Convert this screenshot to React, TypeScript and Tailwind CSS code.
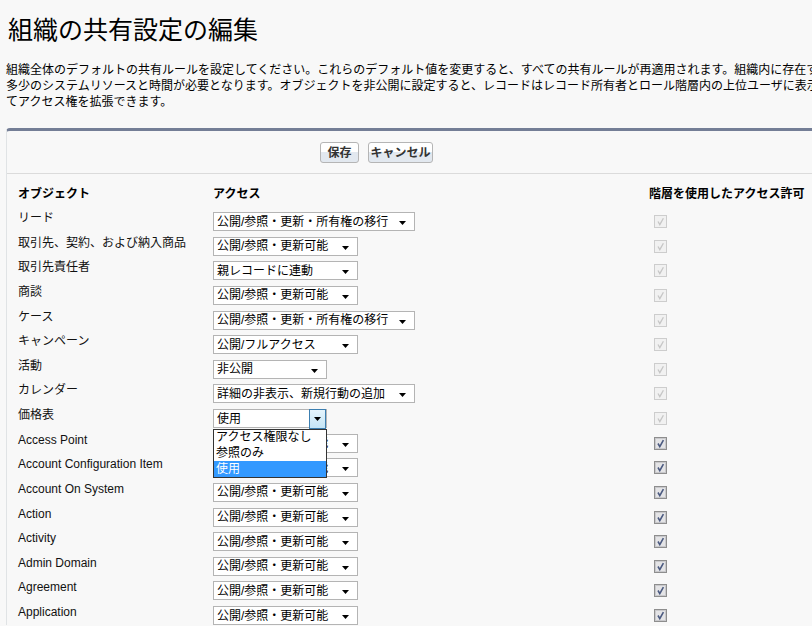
import React from 'react'

type Row = { name: string; access: string; w: 'wide' | 'mid' | 'small'; enabled: boolean; open?: boolean }

const ROWS: Row[] = [
  { name: 'リード', access: '公開/参照・更新・所有権の移行', w: 'wide', enabled: false },
  { name: '取引先、契約、および納入商品', access: '公開/参照・更新可能', w: 'mid', enabled: false },
  { name: '取引先責任者', access: '親レコードに連動', w: 'mid', enabled: false },
  { name: '商談', access: '公開/参照・更新可能', w: 'mid', enabled: false },
  { name: 'ケース', access: '公開/参照・更新・所有権の移行', w: 'wide', enabled: false },
  { name: 'キャンペーン', access: '公開/フルアクセス', w: 'mid', enabled: false },
  { name: '活動', access: '非公開', w: 'small', enabled: false },
  { name: 'カレンダー', access: '詳細の非表示、新規行動の追加', w: 'wide', enabled: false },
  { name: '価格表', access: '使用', w: 'small', enabled: false, open: true },
  { name: 'Access Point', access: '公開/参照・更新可能', w: 'mid', enabled: true },
  { name: 'Account Configuration Item', access: '公開/参照・更新可能', w: 'mid', enabled: true },
  { name: 'Account On System', access: '公開/参照・更新可能', w: 'mid', enabled: true },
  { name: 'Action', access: '公開/参照・更新可能', w: 'mid', enabled: true },
  { name: 'Activity', access: '公開/参照・更新可能', w: 'mid', enabled: true },
  { name: 'Admin Domain', access: '公開/参照・更新可能', w: 'mid', enabled: true },
  { name: 'Agreement', access: '公開/参照・更新可能', w: 'mid', enabled: true },
  { name: 'Application', access: '公開/参照・更新可能', w: 'mid', enabled: true },
]

const WIDTHS = { wide: 'w-[202px]', mid: 'w-[145px]', small: 'w-[114px]' }

function Arrow() {
  return (
    <svg width="7" height="4" viewBox="0 0 7 4">
      <path d="M0 0h7L3.5 4z" fill="#000" />
    </svg>
  )
}

function Select({ row }: { row: Row }) {
  return (
    <div className={`relative mt-[6px] flex h-[19px] items-center border border-[#b4b4b4] bg-white pl-[3px] ${WIDTHS[row.w]}`}>
      <span className="whitespace-nowrap leading-[16px] text-[#000]">{row.access}</span>
      {row.open ? (
        <>
          <div className="absolute right-0 top-[-1px] flex h-[20px] w-[17px] items-center justify-center border border-[#3c7fb1] bg-gradient-to-b from-[#e5f4fc] to-[#c4e5f6]">
            <Arrow />
          </div>
          {/* open option list */}
          <div className="absolute left-[-1px] top-[19px] z-10 flex w-[114px] flex-col border border-[#333] bg-white">
            <div className="flex h-[15.5px] items-center whitespace-nowrap pl-[2px] leading-[15px]">アクセス権限なし</div>
            <div className="flex h-[15.5px] items-center whitespace-nowrap pl-[2px] leading-[15px]">参照のみ</div>
            <div className="flex h-[16px] items-center whitespace-nowrap bg-[#3399ff] pl-[2px] leading-[15px] text-white">使用</div>
          </div>
        </>
      ) : (
        <div className="absolute right-[8px] top-[8px] flex">
          <Arrow />
        </div>
      )}
    </div>
  )
}

function Check({ enabled }: { enabled: boolean }) {
  return enabled ? (
    <div className="mt-[9px] ml-[5px] flex h-[13px] w-[13px] items-center justify-center border border-[#8e8e8e] bg-[#e4e4e6] shadow-[inset_0_0_0_1px_#c9c9cc]">
      <svg width="11" height="11" viewBox="0 0 11 11">
        <path d="M3 5.5 L4.8 8.6 L8.4 2.2" stroke="#4b5a80" strokeWidth="1.6" fill="none" />
      </svg>
    </div>
  ) : (
    <div className="mt-[9px] ml-[5px] flex h-[13px] w-[13px] items-center justify-center border border-[#cdcdcd] bg-[#f1f1f1]">
      <svg width="11" height="11" viewBox="0 0 11 11">
        <path d="M3 5.5 L4.8 8.6 L8.4 2.2" stroke="#c6c6c6" strokeWidth="1.3" fill="none" />
      </svg>
    </div>
  )
}

export default function App() {
  return (
    <div className="h-[626px] w-[812px] overflow-hidden bg-[#f8f8f8] text-[12px] text-black" style={{ fontFamily: '"Liberation Sans", "Noto Sans CJK JP", sans-serif' }}>
      <h1 className="ml-[8px] mt-[17px] h-[26px] whitespace-nowrap text-[25px] font-normal leading-[26px] text-black">
        組織の共有設定の編集
      </h1>

      <div className="ml-[6px] mt-[19px] w-[1400px] leading-[16px]">
        <div className="whitespace-nowrap">組織全体のデフォルトの共有ルールを設定してください。これらのデフォルト値を変更すると、すべての共有ルールが再適用されます。組織内に存在するデータ量によっては、</div>
        <div className="whitespace-nowrap">多少のシステムリソースと時間が必要となります。オブジェクトを非公開に設定すると、レコードはレコード所有者とロール階層内の上位ユーザに表示されます。共有ルールを使用し</div>
        <div className="whitespace-nowrap">てアクセス権を拡張できます。</div>
      </div>

      {/* page block */}
      <div className="ml-[6px] mt-[18px] w-[1000px] rounded-tl-[4px] border-l border-t-[3px] border-l-[#e0e3e5] border-t-[#747e96] bg-[#f8f8f8]">
        <div className="flex gap-[9px] pb-[10px] pl-[313px] pt-[11px]">
          <button className="h-[21px] w-[39px] rounded-[3px] border border-[#b5b5b5] bg-gradient-to-b from-white from-50% to-[#e2e8ef] to-50% text-[12px] font-bold text-[#333]">
            保存
          </button>
          <button className="h-[21px] w-[65px] rounded-[3px] border border-[#b5b5b5] bg-gradient-to-b from-white from-50% to-[#e2e8ef] to-50% text-[12px] font-bold text-[#333]">
            キャンセル
          </button>
        </div>
        <div className="h-px bg-[#dbdbdb]" />

        <div className="pl-[11px] pt-[8px]">
          <div className="grid h-[24px] grid-cols-[195px_436px_1fr] items-center font-bold leading-[16px]">
            <div>オブジェクト</div>
            <div>アクセス</div>
            <div className="whitespace-nowrap">階層を使用したアクセス許可</div>
          </div>
          {ROWS.map(row => (
            <div key={row.name} className="grid h-[24.625px] grid-cols-[195px_436px_1fr] items-start">
              <div className="mt-[4px] whitespace-nowrap leading-[16px] text-[#111]">{row.name}</div>
              <div className={row.open ? 'relative z-10' : ''}>
                <Select row={row} />
              </div>
              <div>
                <Check enabled={row.enabled} />
              </div>
            </div>
          ))}
        </div>
      </div>
    </div>
  )
}
